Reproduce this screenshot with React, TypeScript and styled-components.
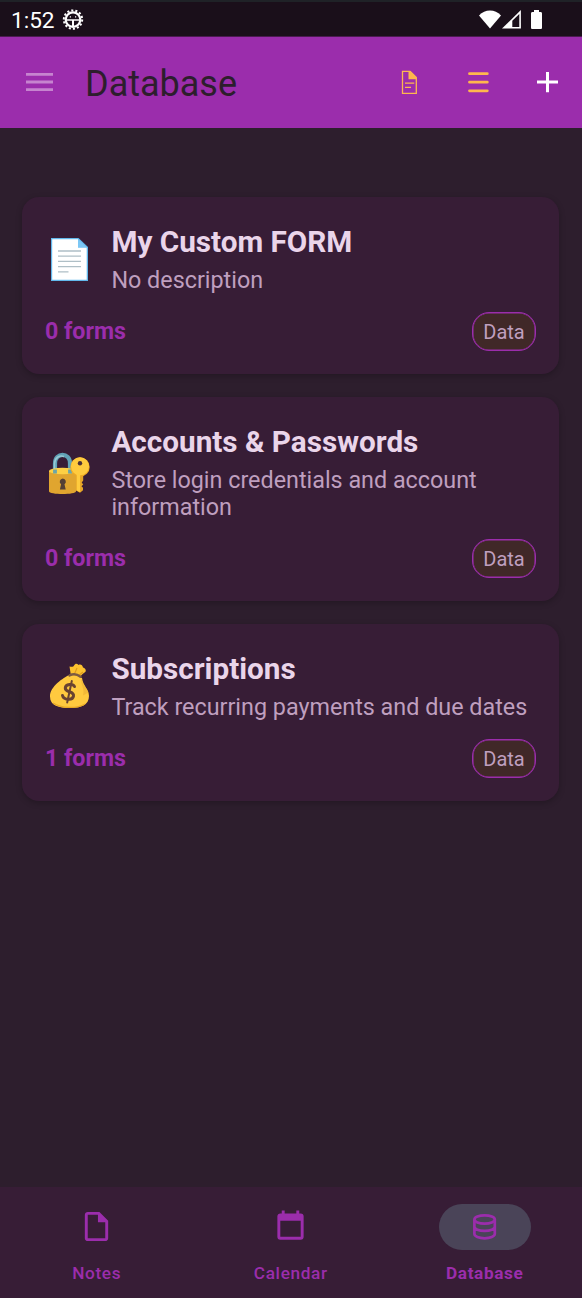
import React from "react";
import styled, { createGlobalStyle } from "styled-components";

const purple = "#9b2dac";
const amber = "#ffb74d";

const GlobalStyle = createGlobalStyle`
  * { box-sizing: border-box; }
  body { margin: 0; background: #2d1e2d; font-family: Roboto, sans-serif; }
  svg { display: block; flex: none; }
`;

const Screen = styled.div`
  display: flex;
  flex-direction: column;
  width: 582px;
  height: 1298px;
  background: #2d1e2d;
  overflow: hidden;
`;

const StatusBar = styled.div`
  display: flex;
  align-items: center;
  height: 37px;
  padding: 1px 39px 0 11px;
  border-top: 2px solid #1f2227;
  border-bottom: 1px solid #4a1c50;
  background: #1a0f1a;
`;

const Clock = styled.span`
  flex: none;
  width: 51px;
  padding-top: 2px;
  font-size: 22.6px;
  line-height: 32px;
  color: #fff;
`;

const StatusIcons = styled.div`
  display: flex;
  align-items: center;
  gap: 9px;
  margin-left: auto;
`;

const Connectivity = styled.div`
  display: flex;
  align-items: center;
  gap: 1px;
`;

const AppBar = styled.header`
  display: flex;
  align-items: center;
  height: 91px;
  padding: 0 17px 0 22px;
  background: ${purple};
`;

const Title = styled.h1`
  flex: 1;
  margin: 2px 0 0 28px;
  font-size: 36px;
  font-weight: 400;
  line-height: 42px;
  color: #2d1e2d;
`;

const Actions = styled.div`
  display: flex;
  align-items: center;
  gap: 34px;
  margin-bottom: 1px;
`;

const List = styled.main`
  display: flex;
  flex: 1;
  flex-direction: column;
  gap: 23px;
  padding: 69px 23px 0 22px;
`;

const Card = styled.article`
  display: flex;
  flex-direction: column;
  gap: 18px;
  padding: 23px;
  border-radius: 17px;
  background: #371d36;
  box-shadow: 0 2px 6px rgba(0, 0, 0, 0.24);
`;

const CardHeader = styled.div`
  display: flex;
  align-items: center;
`;

const Emoji = styled.div`
  flex: none;
  width: 66.4px;
  padding-top: 6px;
`;

const CardTitle = styled.h2`
  margin: 0 0 3px;
  font-size: 29.7px;
  font-weight: 700;
  line-height: 44px;
  color: #ead5ea;
`;

const Description = styled.p`
  margin: 0;
  font-size: 23.34px;
  line-height: 27px;
  color: #bf9fbf;
`;

const CardFooter = styled.div`
  display: flex;
  align-items: center;
  justify-content: space-between;
  height: 39px;
`;

const Count = styled.span`
  font-size: 23.2px;
  font-weight: 700;
  line-height: 27px;
  color: ${purple};
`;

const Badge = styled.span`
  display: flex;
  align-items: center;
  justify-content: center;
  width: 64px;
  height: 39px;
  padding-top: 1px;
  border: 1px solid ${purple};
  border-radius: 17px;
  background: #402828;
  box-shadow: inset 0 0 0 0.5px ${purple};
  font-size: 20px;
  line-height: 24px;
  color: #bf9fbf;
`;

const BottomNav = styled.nav`
  display: flex;
  height: 111px;
  padding: 17px 0 0;
  background: #371d36;
`;

const NavItem = styled.div`
  display: flex;
  flex: 1;
  flex-direction: column;
  align-items: center;
  gap: 12px;
  color: ${purple};
`;

const Pill = styled.div<{ $active?: boolean }>`
  display: flex;
  align-items: center;
  justify-content: center;
  width: 92px;
  height: 46px;
  padding: 0 1px 0.5px 0;
  border-radius: 23px;
  background: ${({ $active }) => ($active ? "#4a4458" : "transparent")};
`;

const NavLabel = styled.span<{ $active?: boolean }>`
  margin-right: 0.5px;
  font-size: 17.2px;
  font-weight: ${({ $active }) => ($active ? 700 : 500)};
  line-height: 22px;
  letter-spacing: 0.65px;
`;

const GearIcon = () => (
  <svg width="22" height="22" viewBox="0 0 22 22" fill="none" stroke="#fff">
    <circle cx="11" cy="10.600" r="9.2" strokeWidth="2" strokeDasharray="2.1 2.029" />
    <circle cx="11" cy="10.600" r="7.3" strokeWidth="2.2" />
    <path d="M4 11h14" strokeWidth="1.5" />
    <path d="M11 11v7" strokeWidth="2" />
    <path d="M7.800 7.800h1.200M13 7.800h1.200" strokeWidth="1.200" />
  </svg>
);

const WifiIcon = () => (
  <svg width="22" height="19" viewBox="0 0 22 19" fill="#fff">
    <path d="M11 18.500 0 5.400C3.200 2 6.800.5 11 .5S18.800 2 22 5.400Z" />
  </svg>
);

const SignalIcon = () => (
  <svg width="20" height="19" viewBox="0 0 20 19">
    <path d="M0 18.500 18.900 0v18.500Z" fill="#fff" />
    <path d="M10.300 10.700 17.300 4v12.900h-7Z" fill="#1a0f1a" />
  </svg>
);

const BatteryIcon = () => (
  <svg width="12" height="20" viewBox="0.5 0 12 20" fill="#fff">
    <path d="M3.500 0h5v2H10c1 0 1.500.6 1.500 1.500v14c0 1-.5 1.500-1.500 1.500H2c-1 0-1.500-.5-1.500-1.500v-14C.5 2.600 1 2 2 2h1.500Z" />
  </svg>
);

const MenuIcon = () => (
  <svg width="35" height="35" viewBox="0 0 35 35" fill="#c684cf">
    <path d="M4 8h27v2.800H4ZM4 15.600h27v2.800H4ZM4 23.200h27v2.800H4Z" />
  </svg>
);

const FormIcon = () => (
  <svg width="35" height="35" viewBox="0 0 35 35" fill="none" stroke={amber}>
    <path d="M10.500 6.300h7.500l6.300 6.300v15.700H10.500Z" strokeWidth="1.300" />
    <path d="M16.500 6.100h2l6 6v2.200h-8Z" fill={amber} stroke="none" />
    <path d="M13 18.100h9.300M13 22.400h6" strokeWidth="1.300" />
  </svg>
);

const ListIcon = () => (
  <svg width="35" height="35" viewBox="0 0 35 35" stroke={amber} strokeWidth="2.800" strokeLinecap="round">
    <path d="M8.500 8.700h17.800M8.500 17.200h17.800M8.500 25.800h17.800" />
  </svg>
);

const PlusIcon = () => (
  <svg width="35" height="35" viewBox="0 0 35 35" fill="#fff">
    <path d="M16 7h3v8.600h9v3h-9v8.700h-3v-8.700H7v-3h9Z" />
  </svg>
);

const PageEmoji = () => (
  <svg width="48" height="48" viewBox="0 0 48 48">
    <path d="M6 2h27.500l9.500 9v34H6Z" fill="#62b8ec" />
    <path d="M7.200 3.200H33v8.300h8.700v32.200H7.200Z" fill="#fff" />
    <path d="M33 3v8.500h9Z" fill="#7cc7f5" />
    <path d="M13 15h23M13 20.200h23M13 25.400h23M13 30.600h23M13 35.800h10.500" stroke="#afbfc6" strokeWidth="1.300" />
  </svg>
);

const LockEmoji = () => (
  <svg width="48" height="48" viewBox="-1 -0.5 48 48">
    <path d="M9 24V13c0-11.500 15-11.500 15 0v11" fill="none" stroke="#61a3b7" strokeWidth="4.200" />
    <path d="M8.500 20v-7C9 6.500 14 4.500 18 6" fill="none" stroke="#98c9d3" strokeWidth="1.500" />
    <path d="M3 20.500v20.300C3 44.500 30 44.500 30 40.800V20.500Z" fill="#e0a52f" />
    <ellipse cx="16.500" cy="20.500" rx="13.500" ry="3.200" fill="#fdd045" />
    <path d="M9 23v-4M24 23v-4" stroke="#6ca5a8" strokeWidth="3.800" />
    <path d="M16.800 28a3.200 3.200 0 0 1 1.700 5.800l1.200 5.200h-5.800l1.200-5.200A3.200 3.200 0 0 1 16.800 28Z" fill="#554035" />
    <path d="M30 24v16l4 2.300 3-2.500v-2.500l-1.500-1.600 1.700-1.700-1.500-2 1.500-2V24Z" fill="#e5a527" />
    <circle cx="34" cy="16.500" r="9.700" fill="#eda923" />
    <circle cx="34" cy="15.800" r="9" fill="#ffcb3e" />
    <path d="M30.700 23v17l3.400 1.500V24" fill="#ffcb3e" />
    <circle cx="34" cy="12.700" r="2.200" fill="#4a3038" />
  </svg>
);

const MoneyEmoji = () => (
  <svg width="48" height="48" viewBox="-1 1 48 48">
    <path d="m25 14-1.500-9.500c2 .3 3.500 1 4.500-1 1.500-2.500 3-2 4.500-.5 2-1 4 0 4.500 2.500 2 .5 3.500 2.500 2.500 4.300-2 1.500-4.500 3.200-6 6.200Z" fill="#fcc22f" />
    <path d="m28 13 3-7M32 14l5-4" stroke="#dc9c21" strokeWidth="1.200" />
    <path d="M24 12.500c-7 3.500-20 12-20 22C4 44 13 46 24 46s19-3 19-12c0-7-6-10-7-18Z" fill="#ffca3f" />
    <path d="M35 15.500c0 9 4 11 2 18l5.500-3C40 25 36.500 22 35 15.500Z" fill="#e9ad34" opacity=".6" />
    <path d="M7 41c8 5.500 24 6 32 1" fill="none" stroke="#e8a926" strokeWidth="1.200" />
    <path d="M23.500 13.500c4-2 8-1 11 1.200" fill="none" stroke="#7c5b42" strokeWidth="2.500" strokeLinecap="round" />
    <g fill="none" stroke="#694331" strokeLinecap="round">
      <path d="M28.500 24.500c-1.300-3-9-3-9.200 1.500-.2 5 9 2.500 8.200 8-.8 5-10 4-11-.5" strokeWidth="3" />
      <path d="m25.800 19-4.600 21.500" strokeWidth="2" />
    </g>
  </svg>
);

const NoteIcon = () => (
  <svg width="35" height="35" viewBox="0 0 24 24" fill="currentColor">
    <path d="M6 2c-1.100 0-2 .9-2 2v16c0 1.100.9 2 2 2h12c1.100 0 2-.9 2-2V8l-6-6Zm0 2h7v5h5v11H6Z" />
  </svg>
);

const CalendarIcon = () => (
  <svg width="35" height="35" viewBox="0 0 24 24" fill="currentColor">
    <path d="M19 19H5V8h14ZM16 1v2H8V1H6v2H5c-1.110 0-2 .89-2 2v14a2 2 0 0 0 2 2h14a2 2 0 0 0 2-2V5a2 2 0 0 0-2-2h-1V1Z" fillRule="evenodd" />
  </svg>
);

const DatabaseIcon = () => (
  <svg width="35" height="35" viewBox="0 0 35 35" fill="none" stroke="currentColor" strokeWidth="2.700">
    <ellipse cx="17.600" cy="10.500" rx="10.200" ry="4.200" />
    <path d="M7.400 10.500v7.200c0 2.300 4.500 4.200 10.200 4.200s10.200-1.900 10.200-4.200V10.500M7.400 17.700v7.400c0 2.300 4.500 4.200 10.200 4.200s10.200-1.900 10.200-4.200V17.700" />
  </svg>
);

const databases = [
  { icon: <PageEmoji />, title: "My Custom FORM", description: "No description", count: 0 },
  {
    icon: <LockEmoji />,
    title: "Accounts & Passwords",
    description: "Store login credentials and account information",
    count: 0,
  },
  { icon: <MoneyEmoji />, title: "Subscriptions", description: "Track recurring payments and due dates", count: 1 },
];

const tabs = [
  { icon: <NoteIcon />, label: "Notes", active: false },
  { icon: <CalendarIcon />, label: "Calendar", active: false },
  { icon: <DatabaseIcon />, label: "Database", active: true },
];

export default function App() {
  return (
    <Screen>
      <GlobalStyle />
      <StatusBar>
        <Clock>1:52</Clock>
        <GearIcon />
        <StatusIcons>
          <Connectivity>
            <WifiIcon />
            <SignalIcon />
          </Connectivity>
          <BatteryIcon />
        </StatusIcons>
      </StatusBar>
      <AppBar>
        <MenuIcon />
        <Title>Database</Title>
        <Actions>
          <FormIcon />
          <ListIcon />
          <PlusIcon />
        </Actions>
      </AppBar>
      <List>
        {databases.map((db) => (
          <Card key={db.title}>
            <CardHeader>
              <Emoji>{db.icon}</Emoji>
              <div>
                <CardTitle>{db.title}</CardTitle>
                <Description>{db.description}</Description>
              </div>
            </CardHeader>
            <CardFooter>
              <Count>{db.count} forms</Count>
              <Badge>Data</Badge>
            </CardFooter>
          </Card>
        ))}
      </List>
      <BottomNav>
        {tabs.map((tab) => (
          <NavItem key={tab.label}>
            <Pill $active={tab.active}>{tab.icon}</Pill>
            <NavLabel $active={tab.active}>{tab.label}</NavLabel>
          </NavItem>
        ))}
      </BottomNav>
    </Screen>
  );
}
